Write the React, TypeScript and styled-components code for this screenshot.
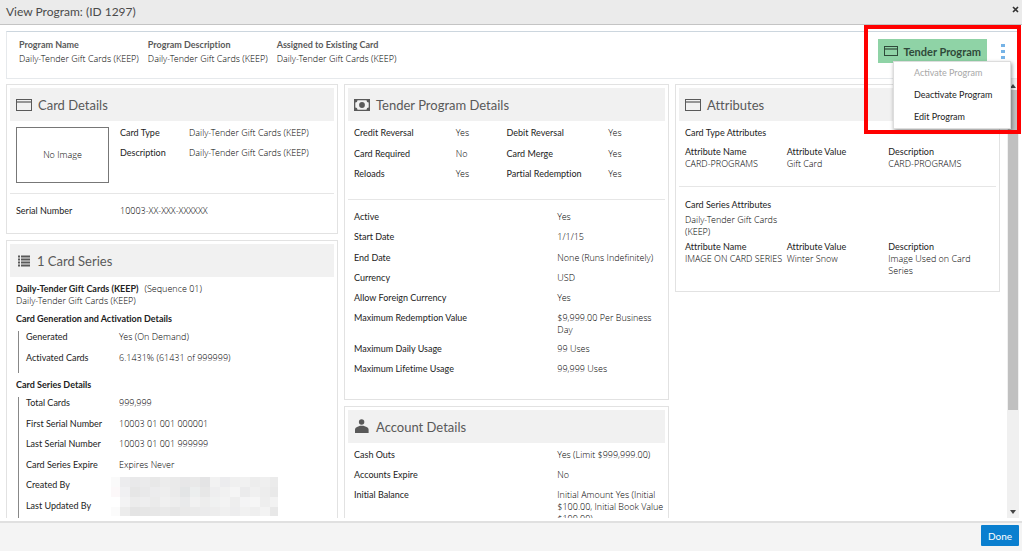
import React from "react";
import styled, { createGlobalStyle, css } from "styled-components";

const GlobalStyle = createGlobalStyle`
  * { box-sizing: border-box; }
  body {
    margin: 0;
    background: #fff;
    color: #333;
    font-family: Lato, "Open Sans", sans-serif;
    font-size: 9px;
    line-height: 12px;
    font-variant-ligatures: none;
  }
  h1, h2, h3, p, dl, dd { margin: 0; padding: 0; font-size: inherit; font-weight: 400; }
  button { font-family: inherit; }
`;

const valueText = css`
  font-family: "Open Sans Light", "Open Sans", sans-serif;
  font-weight: 300;
  color: #000;
`;

const Dialog = styled.div`
  display: flex;
  flex-direction: column;
  height: 100vh;
  overflow: hidden;
`;

const TitleBar = styled.header`
  display: flex;
  align-items: center;
  justify-content: space-between;
  flex: none;
  height: 25px;
  padding: 0 2px 0 6px;
  background: #ebebeb;
  border-bottom: 1px solid #c4c4c4;
`;

const Title = styled.h1`
  font-size: 12px;
  line-height: 24px;
  color: #4a4a4a;
`;

const CloseButton = styled.button`
  display: flex;
  padding: 0 1px 5px;
  border: 0;
  background: none;
  color: #333;
`;

const Summary = styled.section`
  display: flex;
  align-items: flex-start;
  gap: 9px;
  flex: none;
  height: 48px;
  margin: 6px 4px 0 6px;
  padding: 7px 13px 0 12px;
  border: 1px solid #e6e9ec;
  border-top-color: #ccd6de;
  border-right: 0;
`;

const SummaryLabel = styled.h3`
  margin-bottom: 2px;
  font-weight: 700;
  color: #5a5a5a;
`;

const SummaryValue = styled.p`
  ${valueText}
`;

const Actions = styled.div`
  position: relative;
  display: flex;
  align-items: center;
  gap: 14px;
  margin-left: auto;
`;

const TenderButton = styled.button`
  display: flex;
  align-items: center;
  gap: 5px;
  height: 24px;
  padding: 0 6px;
  border: 0;
  background: #8fd3a6;
  color: #2f4a3a;
  font-size: 11px;
  font-weight: 700;
  white-space: nowrap;
`;

const MoreButton = styled.button`
  display: flex;
  padding: 0;
  border: 0;
  background: none;
  color: #76b3e6;
`;

const Menu = styled.div`
  position: absolute;
  z-index: 2;
  top: 22px;
  right: -6px;
  display: flex;
  flex-direction: column;
  width: 118px;
  background: #fff;
  border: 1px solid #ddd;
  box-shadow: 1px 2px 4px rgba(0, 0, 0, 0.4);
`;

const MenuItem = styled.button`
  height: 22px;
  padding: 0 0 0 20px;
  border: 0;
  background: none;
  color: #1c1c1c;
  font-size: 9px;
  line-height: 22px;
  text-align: left;
  &:disabled { color: #a8a8a8; }
`;

const Highlight = styled.div`
  position: absolute;
  z-index: 3;
  top: -14px;
  right: -16px;
  width: 157px;
  height: 109px;
  border: 4px solid #f00;
  pointer-events: none;
`;

const Viewport = styled.div`
  display: flex;
  flex: 1;
  min-height: 0;
  margin: 0 3px 3px 6px;
  overflow: hidden;
`;

const Columns = styled.main`
  display: grid;
  grid-template-columns: 332fr 325fr 325fr;
  align-items: start;
  gap: 6px;
  flex: 1;
  padding: 5px 7px 0 0;
`;

const Column = styled.div`
  display: flex;
  flex-direction: column;
  gap: 6px;
  min-width: 0;
`;

const Card = styled.section`
  padding: 3px 3px 0;
  border: 1px solid #e2e2e2;
`;

const CardTitle = styled.h2`
  display: flex;
  align-items: center;
  gap: 6px;
  height: 33px;
  padding: 0 6px;
  background: #f1f1f1;
  color: #595959;
  font-size: 13px;
`;

const CardBody = styled.div<{ $bottom: number }>`
  padding: 6px 6px ${(p) => p.$bottom}px;
`;

const Divider = styled.hr<{ $top: number; $bottom: number }>`
  height: 1px;
  margin: ${(p) => p.$top}px -6px ${(p) => p.$bottom}px;
  border: 0;
  background: #e6e6e6;
`;

const List = styled.dl<{ $minHeight?: number }>`
  display: grid;
  flex: 1;
  align-content: space-between;
  row-gap: 6px;
  min-height: ${(p) => p.$minHeight ?? 0}px;
`;

const Row = styled.div<{ $cols: string }>`
  display: grid;
  grid-template-columns: ${(p) => p.$cols};
  min-height: 14px;
`;

const Label = styled.dt`
  color: #222;
`;

const Value = styled.dd`
  ${valueText}
  &:last-child { margin-right: -5px; }
`;

const CardFace = styled.div`
  display: flex;
  align-items: flex-start;
  gap: 11px;
`;

const NoImage = styled.div`
  display: flex;
  align-items: center;
  justify-content: center;
  width: 93px;
  height: 56px;
  border: 1px solid #777;
  ${valueText}
`;

const Sequence = styled.p`
  ${valueText}
`;

const SeriesName = styled.strong`
  margin-right: 6px;
  font-family: Lato, sans-serif;
  font-weight: 700;
  color: #222;
`;

const GroupTitle = styled.h3`
  margin: 6px 0;
  font-weight: 700;
  color: #222;
`;

const Group = styled.div`
  position: relative;
  display: flex;
  margin-left: 2px;
  padding: 0 0 7px 7px;
  border-left: 1px solid #888;
`;

const Redaction = styled.svg`
  position: absolute;
  left: 92px;
  bottom: 5px;
`;

const AttributeSection = styled.section`
  display: flex;
  flex-direction: column;
  gap: 7px;
`;

const SubTitle = styled.h3`
  color: #222;
`;

const AttributeTable = styled.table`
  width: 100%;
  table-layout: fixed;
  border-collapse: collapse;
  th, td {
    padding: 0;
    font-weight: 400;
    text-align: left;
    vertical-align: top;
    white-space: nowrap;
  }
  th { color: #222; }
  td { ${valueText} }
  td:last-child { padding-right: 16px; white-space: normal; }
`;

const SeriesText = styled.p`
  width: 33%;
  margin: 3px 0;
  ${valueText}
`;

const ScrollTrack = styled.div`
  display: flex;
  flex-direction: column;
  align-items: center;
  width: 12px;
  padding: 5px 0 4px;
  background: #f0f0f0;
  color: #444;
`;

const ScrollThumb = styled.div`
  flex: 318;
  width: 10px;
  margin-top: 2px;
  background: #c0c0c0;
`;

const ScrollRest = styled.div`
  flex: 99;
`;

const Footer = styled.footer`
  display: flex;
  justify-content: flex-end;
  flex: none;
  height: 30px;
  padding: 2px 3px 0 0;
  background: #f4f4f4;
  border-top: 2px solid #e0e0e0;
`;

const DoneButton = styled.button`
  width: 38px;
  height: 21px;
  padding: 0;
  border: 0;
  border-radius: 1px;
  background: #0a7fcf;
  color: #fff;
  font-size: 10px;
`;

const CardIcon = ({ width = 16, height = 12 }: { width?: number; height?: number }) => (
  <svg width={width} height={height} viewBox={`0 0 ${width} ${height}`} fill="none" stroke="currentColor" aria-hidden="true">
    <rect x="0.5" y="0.5" width={width - 1} height={height - 1} />
    <path d={`M0 3h${width}`} strokeWidth="1.2" />
  </svg>
);

const CashIcon = () => (
  <svg width="16" height="12" viewBox="0 0 16 12" fill="currentColor" aria-hidden="true">
    <path fillRule="evenodd" d="M0 0h16v12H0zM3.5 1.3A2.2 2.2 0 0 1 1.3 3.5v5a2.2 2.2 0 0 1 2.2 2.2h9a2.2 2.2 0 0 1 2.2-2.2v-5a2.2 2.2 0 0 1-2.2-2.2z" />
    <circle cx="8" cy="6" r="2.9" />
  </svg>
);

const ListIcon = () => (
  <svg width="15" height="12" viewBox="0 0 15 12" fill="currentColor" aria-hidden="true">
    {[0, 3, 6, 9].map((y) => (
      <path key={y} d={`M2 ${y + 0.5}h2v2H2zM5 ${y + 0.5}h9v2H5z`} />
    ))}
  </svg>
);

const PersonIcon = () => (
  <svg width="16" height="15" viewBox="0 0 16 15" fill="currentColor" aria-hidden="true">
    <circle cx="7.6" cy="3" r="2.7" />
    <path d="M1 14v-3.4Q1 8.6 3 8L6 6.8h3.4L12.6 8q2 .6 2 2.6V14z" />
  </svg>
);

const shades = [
  ["#fafafa", "#ececee", "#e9e9ea", "#ebebec", "#e8e8e8", "#ececec", "#eaeaea", "#e7e7e8", "#e9e9e9", "#e4e4e5", "#f2f2f2", "#ececee", "#f0f0f0", "#f1f1f1", "#ededed", "#efefef", "#ebebeb"],
  ["#fcf8f9", "#f0f0f2", "#e6e6e6", "#e9e9ea", "#ececed", "#eeeeee", "#eaeaea", "#e3e5e6", "#eceeee", "#e7e7e7", "#eeeeef", "#f1f1f1", "#f5f5f5", "#ebebec", "#f0f0f0", "#ededed", "#e9e9e9"],
  ["#ffffff", "#f3f3f4", "#ececec", "#eeeeef", "#ebebeb", "#f0f0f0", "#ededed", "#e9eaeb", "#f1f1f1", "#ededed", "#f0f1f1", "#f3f3f3", "#eeeeee", "#f4f4f5", "#f6f6f6", "#eeeeee", "#f2f2f2"],
  ["#fbfbfb", "#ececec", "#e4e4e4", "#e6e6e6", "#e7e7e7", "#e9e9e9", "#e6e6e6", "#e9e9e9", "#eaeaea", "#ebebec", "#ededed", "#f0f0f0", "#ededee", "#f1f1f1", "#efefef", "#f3f3f3", "#e8e8e8"],
];

const MaskedNames = () => (
  <Redaction width="167" height="39" viewBox="0 0 167 39" shapeRendering="crispEdges" role="img" aria-label="Hidden names">
    {shades.flatMap((line, r) =>
      line.map((fill, c) => (
        <rect key={`${r}-${c}`} x={c * 10 - 1} y={r * 10} width="10" height="10" fill={fill} />
      )),
    )}
  </Redaction>
);

type Pair = [string, string];

const Pairs = ({ rows, cols, minHeight }: { rows: Pair[]; cols: string; minHeight?: number }) => (
  <List $minHeight={minHeight}>
    {rows.map(([label, value]) => (
      <Row key={label} $cols={cols}>
        <Label>{label}</Label>
        <Value>{value}</Value>
      </Row>
    ))}
  </List>
);

const Attributes = ({ name, value, description }: { name: string; value: string; description: string }) => (
  <AttributeTable>
    <thead>
      <tr>
        <th scope="col">Attribute Name</th>
        <th scope="col">Attribute Value</th>
        <th scope="col">Description</th>
      </tr>
    </thead>
    <tbody>
      <tr>
        <td>{name}</td>
        <td>{value}</td>
        <td>{description}</td>
      </tr>
    </tbody>
  </AttributeTable>
);

const program = "Daily-Tender Gift Cards (KEEP)";

const flags = [
  ["Credit Reversal", "Yes", "Debit Reversal", "Yes"],
  ["Card Required", "No", "Card Merge", "Yes"],
  ["Reloads", "Yes", "Partial Redemption", "Yes"],
];

export default function App() {
  return (
    <>
      <GlobalStyle />
      <Dialog role="dialog" aria-label="View Program">
        <TitleBar>
          <Title>View Program: (ID 1297)</Title>
          <CloseButton aria-label="Close">
            <svg width="7" height="7" viewBox="0 0 7 7" stroke="currentColor" strokeWidth="1.6">
              <path d="M1 1l5 5M6 1L1 6" />
            </svg>
          </CloseButton>
        </TitleBar>

        <Summary>
          {["Program Name", "Program Description", "Assigned to Existing Card"].map((label) => (
            <div key={label}>
              <SummaryLabel>{label}</SummaryLabel>
              <SummaryValue>{program}</SummaryValue>
            </div>
          ))}
          <Actions>
            <TenderButton>
              <CardIcon width={14} height={10} />
              Tender Program
            </TenderButton>
            <MoreButton aria-label="More actions">
              <svg width="4" height="15" viewBox="0 0 4 15" fill="currentColor">
                <path d="M0 0h4v3H0zM0 6h4v3H0zM0 12h4v3H0z" />
              </svg>
            </MoreButton>
            <Menu role="menu">
              <MenuItem role="menuitem" disabled>Activate Program</MenuItem>
              <MenuItem role="menuitem">Deactivate Program</MenuItem>
              <MenuItem role="menuitem">Edit Program</MenuItem>
            </Menu>
            <Highlight />
          </Actions>
        </Summary>

        <Viewport>
          <Columns>
            <Column>
              <Card>
                <CardTitle><CardIcon />Card Details</CardTitle>
                <CardBody $bottom={14}>
                  <CardFace>
                    <NoImage>No Image</NoImage>
                    <Pairs cols="69px 1fr" rows={[["Card Type", program], ["Description", program]]} />
                  </CardFace>
                  <Divider $top={10} $bottom={11} />
                  <Pairs cols="104px 1fr" rows={[["Serial Number", "10003-XX-XXX-XXXXXX"]]} />
                </CardBody>
              </Card>
              <Card>
                <CardTitle><ListIcon />1 Card Series</CardTitle>
                <CardBody $bottom={20}>
                  <Sequence><SeriesName>{program}</SeriesName>(Sequence 01)</Sequence>
                  <Sequence>{program}</Sequence>
                  <GroupTitle>Card Generation and Activation Details</GroupTitle>
                  <Group>
                    <Pairs
                      cols="93px 1fr"
                      minHeight={35}
                      rows={[["Generated", "Yes (On Demand)"], ["Activated Cards", "6.1431% (61431 of 999999)"]]}
                    />
                  </Group>
                  <GroupTitle>Card Series Details</GroupTitle>
                  <Group>
                    <Pairs
                      cols="93px 1fr"
                      minHeight={117}
                      rows={[
                        ["Total Cards", "999,999"],
                        ["First Serial Number", "10003 01 001 000001"],
                        ["Last Serial Number", "10003 01 001 999999"],
                        ["Card Series Expire", "Expires Never"],
                        ["Created By", ""],
                        ["Last Updated By", ""],
                      ]}
                    />
                    <MaskedNames />
                  </Group>
                </CardBody>
              </Card>
            </Column>

            <Column>
              <Card>
                <CardTitle><CashIcon />Tender Program Details</CardTitle>
                <CardBody $bottom={22}>
                  <List $minHeight={55}>
                    {flags.map((f) => (
                      <Row key={f[0]} $cols="2fr 1fr 2fr 1fr">
                        <Label>{f[0]}</Label>
                        <Value>{f[1]}</Value>
                        <Label>{f[2]}</Label>
                        <Value>{f[3]}</Value>
                      </Row>
                    ))}
                  </List>
                  <Divider $top={17} $bottom={11} />
                  <Pairs
                    cols="2fr 1fr"
                    minHeight={166}
                    rows={[
                      ["Active", "Yes"],
                      ["Start Date", "1/1/15"],
                      ["End Date", "None (Runs Indefinitely)"],
                      ["Currency", "USD"],
                      ["Allow Foreign Currency", "Yes"],
                      ["Maximum Redemption Value", "$9,999.00 Per Business Day"],
                      ["Maximum Daily Usage", "99 Uses"],
                      ["Maximum Lifetime Usage", "99,999 Uses"],
                    ]}
                  />
                </CardBody>
              </Card>
              <Card>
                <CardTitle><PersonIcon />Account Details</CardTitle>
                <CardBody $bottom={20}>
                  <Pairs
                    cols="2fr 1fr"
                    rows={[
                      ["Cash Outs", "Yes (Limit $999,999.00)"],
                      ["Accounts Expire", "No"],
                      ["Initial Balance", "Initial Amount Yes (Initial $100.00, Initial Book Value $100.00)"],
                    ]}
                  />
                </CardBody>
              </Card>
            </Column>

            <Column>
              <Card>
                <CardTitle><CardIcon />Attributes</CardTitle>
                <CardBody $bottom={14}>
                  <AttributeSection>
                    <SubTitle>Card Type Attributes</SubTitle>
                    <Attributes name="CARD-PROGRAMS" value="Gift Card" description="CARD-PROGRAMS" />
                  </AttributeSection>
                  <Divider $top={16} $bottom={12} />
                  <SubTitle>Card Series Attributes</SubTitle>
                  <SeriesText>{program}</SeriesText>
                  <Attributes name="IMAGE ON CARD SERIES" value="Winter Snow" description="Image Used on Card Series" />
                </CardBody>
              </Card>
            </Column>
          </Columns>
          <ScrollTrack aria-hidden="true">
            <svg width="6" height="4" viewBox="0 0 6 4" fill="currentColor"><path d="M0 4l3-4 3 4z" /></svg>
            <ScrollThumb />
            <ScrollRest />
            <svg width="6" height="4" viewBox="0 0 6 4" fill="currentColor"><path d="M0 0h6L3 4z" /></svg>
          </ScrollTrack>
        </Viewport>

        <Footer>
          <DoneButton>Done</DoneButton>
        </Footer>
      </Dialog>
    </>
  );
}
